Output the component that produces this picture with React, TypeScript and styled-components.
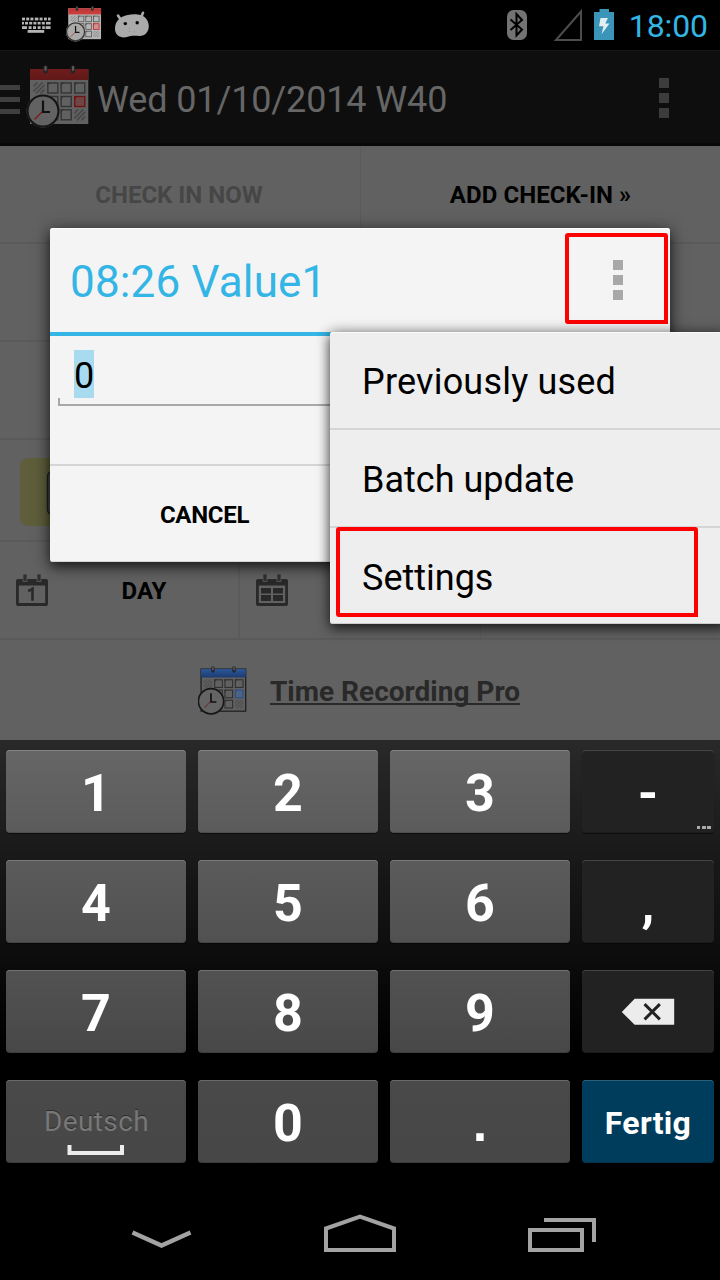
import React from 'react';
import styled, { createGlobalStyle } from 'styled-components';

const GlobalStyle = createGlobalStyle`
  * { box-sizing: border-box; }
  body { margin: 0; background: #000; font-family: Roboto, "Liberation Sans", sans-serif; }
  button { font-family: inherit; border: 0; padding: 0; background: none; }
`;

const Screen = styled.div`
  position: relative;
  width: 720px;
  height: 1280px;
  display: flex;
  flex-direction: column;
  overflow: hidden;
  background: #000;
`;

const StatusBar = styled.header`
  height: 50px;
  flex: none;
  display: flex;
  justify-content: space-between;
  padding: 0 12px 0 18px;
  background: #000;
`;

const StatusGroup = styled.div`
  display: flex;
  align-items: flex-start;
`;

const Clock = styled.span`
  margin-left: 13px;
  color: #33b5e5;
  font-size: 32px;
  line-height: 52px;
  letter-spacing: -0.1px;
`;

const ActionBar = styled.div`
  height: 96px;
  flex: none;
  display: flex;
  align-items: center;
  background: #0e0e0e;
  border-top: 1px solid #171717;
  border-bottom: 3px solid #080808;
`;

const DrawerMark = styled.div`
  width: 20px;
  display: flex;
  flex-direction: column;
  gap: 7px;
  margin: 4px 6px 0 0;
`;

const DrawerLine = styled.i`
  height: 5px;
  background: #3f3f3f;
`;

const ActionTitle = styled.h1`
  flex: 1;
  margin: 6px 0 0 7px;
  font-size: 36px;
  line-height: 44px;
  font-weight: 400;
  letter-spacing: -0.13px;
  color: #666;
`;

const Dots = styled.div<{ $color: string }>`
  display: flex;
  flex-direction: column;
  gap: 5px;
  & > i { width: 10px; height: 10px; background: ${(p) => p.$color}; }
`;

const OverflowSlot = styled.div`
  width: 61px;
  padding-top: 2px;
`;

const Content = styled.main`
  height: 594px;
  flex: none;
  display: flex;
  flex-direction: column;
  background: #616161;
`;

const Row = styled.div<{ $height: number }>`
  height: ${(p) => p.$height}px;
  flex: none;
  display: flex;
  border-bottom: 2px solid #5a5a5a;
`;

const HalfButton = styled.button<{ $color: string; $line?: boolean }>`
  width: 360px;
  padding: 1px ${(p) => (p.$line ? 0 : 2)}px 0 ${(p) => (p.$line ? 1 : 0)}px;
  font-size: 24px;
  font-weight: 700;
  letter-spacing: ${(p) => (p.$line ? 0.08 : 0)}px;
  color: ${(p) => p.$color};
  box-shadow: ${(p) => (p.$line ? 'inset 1px 0 #5b5b5b' : 'none')};
`;

const NoteTile = styled.div`
  width: 84px;
  height: 68px;
  margin: 18px 0 0 20px;
  padding: 12px 0 0 26px;
  border-radius: 8px;
  background: #5e5e3b;
`;

const PeriodTab = styled.button<{ $wide?: boolean }>`
  width: ${(p) => (p.$wide ? 241 : 240)}px;
  flex: none;
  display: flex;
  align-items: center;
  padding-left: 16px;
  border-right: ${(p) => (p.$wide ? 1 : 2)}px solid #5b5b5b;
`;

const PeriodLabel = styled.span`
  flex: 1;
  text-align: center;
  font-size: 24px;
  line-height: 30px;
  font-weight: 700;
  color: #000;
  padding: 2px 0 0 2px;
`;

const Promo = styled.footer`
  flex: 1;
  display: flex;
  align-items: center;
  padding-left: 198px;
`;

const PromoLink = styled.a`
  margin: 4px 0 0 23px;
  font-size: 28px;
  line-height: 34px;
  font-weight: 700;
  color: #292929;
  text-decoration: underline;
  text-decoration-thickness: 2px;
  text-underline-offset: 2px;
  text-decoration-skip-ink: none;
`;

const Dialog = styled.section`
  position: absolute;
  left: 50px;
  top: 228px;
  width: 620px;
  height: 334px;
  display: flex;
  flex-direction: column;
  background: #f4f4f4;
  border-radius: 3px;
  box-shadow: inset 0 1px #fff, inset 0 -1px #d5d5d5, 0 5px 12px rgba(0, 0, 0, 0.55), 0 2px 18px rgba(0, 0, 0, 0.4);
`;

const DialogHead = styled.div`
  height: 108px;
  display: flex;
  padding-left: 20px;
  border-bottom: 4px solid #33b5e5;
`;

const DialogTitle = styled.h2`
  flex: 1;
  margin: 0;
  font-size: 44px;
  line-height: 108px;
  font-weight: 400;
  letter-spacing: 0.17px;
  color: #33b5e5;
`;

const DialogMenuButton = styled.button`
  width: 103px;
  height: 91px;
  margin: 5px 2px 0 0;
  display: flex;
  align-items: center;
  justify-content: center;
  padding: 2px 0 0 2px;
  border: 4px solid #f00;
  border-radius: 3px 3px 0 3px;
`;

const DialogBody = styled.div`
  height: 128px;
  padding: 14px 8px 0;
`;

const Field = styled.div`
  height: 56px;
  padding-left: 16px;
  background:
    linear-gradient(#a8a8a8, #a8a8a8) left bottom / 2px 8px no-repeat,
    linear-gradient(#a8a8a8, #a8a8a8) left bottom / 100% 2px no-repeat;
`;

const Selection = styled.span`
  display: inline-block;
  width: 20px;
  height: 48px;
  font-size: 36px;
  line-height: 52px;
  background: #a8dbf0;
  color: #000;
`;

const DialogButton = styled.button`
  flex: 1;
  padding: 2px 311px 0 0;
  border-top: 2px solid #d5d5d5;
  font-size: 24px;
  font-weight: 700;
  letter-spacing: -0.3px;
  color: #000;
`;

const Menu = styled.ul`
  position: absolute;
  left: 330px;
  top: 332px;
  width: 396px;
  height: 292px;
  margin: 0;
  padding: 0;
  list-style: none;
  background: #eee;
  border-radius: 3px;
  box-shadow: inset 0 1px #fafafa, inset 0 -1px #ccc, 0 5px 12px rgba(0, 0, 0, 0.55), 0 0 14px rgba(0, 0, 0, 0.4);
`;

const MenuItem = styled.li<{ $spacing?: number }>`
  position: relative;
  height: 98px;
  padding-left: 32px;
  font-size: 36px;
  line-height: 101px;
  letter-spacing: ${(p) => p.$spacing ?? 0}px;
  color: #000;
  border-bottom: 2px solid #d5d5d5;
  &:last-child { height: 96px; border-bottom: 0; }
`;

const Highlight = styled.div`
  position: absolute;
  left: 6px;
  top: -1px;
  width: 362px;
  height: 90px;
  border: 4px solid #f00;
  border-radius: 3px 3px 0 3px;
`;

const Keyboard = styled.div`
  height: 444px;
  flex: none;
  display: grid;
  grid-template-columns: 180px 180px 180px 132px;
  grid-auto-rows: 83px;
  gap: 27px 12px;
  padding: 10px 6px 0;
  background: linear-gradient(#292929 0, #1a1a1a 110px, #0c0c0c 220px, #000 310px);
`;

const Key = styled.button<{ $from: string; $to: string; $edge: string; $small?: boolean }>`
  position: relative;
  display: flex;
  flex-direction: column;
  align-items: center;
  border-radius: 4px;
  font-size: ${(p) => (p.$small ? 32 : 52)}px;
  line-height: ${(p) => (p.$small ? 86 : 87)}px;
  letter-spacing: ${(p) => (p.$small ? 0.3 : 0)}px;
  font-weight: 700;
  color: #fff;
  background: linear-gradient(${(p) => p.$from}, ${(p) => p.$to});
  box-shadow: inset 0 1px ${(p) => p.$edge}, inset 0 -1px rgba(0, 0, 0, 0.15), 0 1px 1px rgba(0, 0, 0, 0.5);
`;

const PointMark = styled.span`
  font-family: "Liberation Sans", sans-serif;
  line-height: 86px;
`;

const SpaceLabel = styled.span`
  height: 65px;
  font-size: 28px;
  line-height: 84px;
  font-weight: 400;
  letter-spacing: 0.4px;
  padding-left: 1px;
  color: #777;
  text-shadow: 0 -1px #2c2c2c;
`;

const MoreHint = styled.span`
  position: absolute;
  right: 3px;
  bottom: 4px;
  display: flex;
  gap: 1px;
  & > i { width: 4px; height: 3px; background: #aaa; }
  & > i:first-child { width: 3px; margin-right: 1px; }
`;

const NavBar = styled.nav`
  height: 96px;
  flex: none;
  display: flex;
  gap: 131px;
  padding: 28px 0 0 131px;
`;

interface CalendarProps {
  size: number;
  head: string;
  headLow: string;
  paper: string;
  ink: string;
  accent: string;
  accentFill: string;
  hatch: string;
  face: string;
  rim: string;
  hand: string;
  outline?: string;
  clockRadius?: number;
}

function CalendarClock(p: CalendarProps) {
  const id = 'head' + p.size;
  const r = p.clockRadius ?? 15.5;
  const xs = [7.5, 21.3, 34.7, 48.3];
  const ys = [17.5, 31, 44.3];
  return (
    <svg width={p.size} height={p.size} viewBox="0 0 64 64">
      <defs>
        <linearGradient id={id} x1="0" y1="0" x2="0" y2="1">
          <stop offset="0" stopColor={p.head} />
          <stop offset="1" stopColor={p.headLow} />
        </linearGradient>
      </defs>
      <rect x="4" y="4" width="58.3" height="55" fill={p.paper} stroke={p.outline ?? 'none'} strokeWidth="1.6" />
      <rect x="4" y="4" width="58.3" height="11" fill={`url(#${id})`} />
      {ys.map((y, j) =>
        xs.map((x, i) => {
          if (i === 0 && j > 0) return null;
          if ((i === 0 && j === 0) || (i === 3 && j === 2)) {
            return (
              <path
                key={`${i}${j}`}
                d={`M${x} ${y + 4}l4-4M${x} ${y + 9}l9-9M${x + 2.5} ${y + 11}l8.5-8.5M${x + 7} ${y + 11}l4-4`}
                stroke={p.hatch}
                strokeWidth="1.7"
              />
            );
          }
          const hot = i === 3 && j === 1;
          return (
            <g key={`${i}${j}`}>
              <rect x={x + 0.5} y={y + 0.5} width="10" height="10" fill={hot ? p.accentFill : 'none'} stroke={hot ? p.accent : p.ink} strokeWidth="1.4" />
              <path d={`M${x} ${y}h3.500l-3.500 3.500z`} fill={hot ? p.accent : p.ink} />
            </g>
          );
        }),
      )}
      {[19.5, 47].map((x) => (
        <g key={x}>
          <rect x={x - 2.2} y="0.2" width="4.4" height="8.2" rx="2" fill="#242424" />
          <rect x={x - 1} y="1" width="2" height="5" rx="1" fill="#5c5c5c" />
        </g>
      ))}
      <circle cx="17" cy="46" r={r + 1} fill={p.paper} />
      <circle cx="17" cy="46" r={r} fill={p.face} stroke={p.rim} strokeWidth="2.2" />
      <path d="M17 46l-8.500 8.500" stroke={p.hand} strokeWidth="1.4" />
      <path d="M17 35.500v11.500h7" fill="none" stroke="#111" strokeWidth="2.200" />
    </svg>
  );
}

const keyboardRows = [
  { y: 0, h: 2.8, keys: [[0, 3], [4.2, 3], [8.4, 3], [12.8, 3.6], [17.6, 3], [22, 2.8], [26, 2.6]] },
  { y: 4.3, h: 2.6, keys: [[0, 2], [3, 3], [7.2, 3], [11.4, 3], [15.6, 3], [19.8, 3], [24, 4.6]] },
  { y: 8.6, h: 2.8, keys: [[0, 5], [6.6, 3], [11, 3], [15.6, 3], [20.2, 2.6], [23.6, 5]] },
  { y: 12.4, h: 2.8, keys: [[5.6, 16.6]] },
];

const KeyboardIcon = () => (
  <svg width="30" height="50" viewBox="22 0 30 50">
    <g transform="translate(22 17.6)" fill="#b4b4b4">
      {keyboardRows.map((row) =>
        row.keys.map(([x, w]) => <rect key={`${row.y}-${x}`} x={x} y={row.y} width={w} height={row.h} />),
      )}
    </g>
  </svg>
);

const DroidIcon = () => (
  <svg width="36" height="50" viewBox="114 0 36 50">
    <path d="M118 15.500l3.400 5M143 12.800l-2.500 6" stroke="#aaa" strokeWidth="2.600" strokeLinecap="round" />
    <path
      d="M115 29c0-5.500 2.600-9.600 7.300-12.200 4.500-2.800 14-3.200 18.300-1.800 5.400 1.800 8.200 6.300 8.200 11.300 0 6-4.200 10-9.600 9.700-5-.6-8.400-.4-12.300 1-6 1.800-11.900-1.800-11.900-8z"
      fill="#aaa"
    />
    <circle cx="125.300" cy="23.600" r="1.700" fill="#000" />
    <circle cx="137.200" cy="22.700" r="1.700" fill="#000" />
    <g fill="#888">
      <circle cx="129.500" cy="28.500" r=".5" />
      <circle cx="129.500" cy="31.500" r=".5" />
      <circle cx="134.500" cy="31.800" r=".5" />
    </g>
  </svg>
);

const SystemIcons = () => (
  <svg width="111" height="50" viewBox="505 0 111 50">
    <rect x="507" y="10" width="20" height="30" rx="6.500" fill="#737373" />
    <path d="M510.500 19.500l11.500 10-5.500 6v-21.500l5.500 6-11.500 10" fill="none" stroke="#000" strokeWidth="2" />
    <path d="M556 40l25-28.500v28.500z" fill="none" stroke="#4c4c4c" strokeWidth="2" />
    <path d="M594 40v-28h5.500v-3h9.500v3h5v28z" fill="#3a95b9" />
    <path d="M600.500 18h7.500l-2.800 5.500h4.300l-8 10.800 2-8h-4.500z" fill="#e3eef3" />
  </svg>
);

const PeriodIcon = ({ week }: { week?: boolean }) => (
  <svg width="32" height="32" viewBox="0 0 32 32">
    <path d="M2 5h28a2 2 0 0 1 2 2v23a2 2 0 0 1-2 2H2a2 2 0 0 1-2-2V7a2 2 0 0 1 2-2z" fill="#292929" />
    <rect x="2.800" y="11.500" width="26.400" height="17.500" fill="#616161" />
    <rect x="7" y="0" width="4" height="7.500" fill="#303030" stroke="#616161" strokeWidth=".7" />
    <rect x="21" y="0" width="4" height="7.500" fill="#303030" stroke="#616161" strokeWidth=".7" />
    {week ? (
      <path d="M5 14h10v5.500H5zM17 14h10v5.500H17zM5 21h10v6H5zM17 21h10v6H17z" fill="#292929" />
    ) : (
      <path d="M12 16.500h1.500l3-1.800v12.100" fill="none" stroke="#292929" strokeWidth="2.600" />
    )}
  </svg>
);

const digitTones = [
  { from: '#666', to: '#5b5b5b', edge: '#838383' },
  { from: '#5b5b5b', to: '#515151', edge: '#7a7a7a' },
  { from: '#525252', to: '#484848', edge: '#727272' },
  { from: '#494949', to: '#474747', edge: '#6a6a6a' },
];
const darkTone = { from: '#222', to: '#222', edge: '#454545' };
const blueTone = { from: '#003d5c', to: '#003d5c', edge: '#2b5f7a' };

const keyRows = [
  ['1', '2', '3', '-'],
  ['4', '5', '6', ','],
  ['7', '8', '9', 'delete'],
  ['space', '0', '.', 'Fertig'],
];

function KeyFace({ name }: { name: string }) {
  if (name === 'delete') {
    return (
      <svg width="54" height="84" viewBox="0 0 54 84">
        <path d="M.5 42.500l13-13.500h40v26.500H13.500z" fill="#ececec" />
        <path d="M23.500 34.500l15.500 15.500M39 34.500L23.500 50" stroke="#222" strokeWidth="3" />
      </svg>
    );
  }
  if (name === 'space') {
    return (
      <>
        <SpaceLabel>Deutsch</SpaceLabel>
        <svg width="58" height="11" viewBox="0 0 58 11">
          <path d="M2.500 0v8h52.500v-8" fill="none" stroke="#ececec" strokeWidth="4" />
        </svg>
      </>
    );
  }
  if (name === '.') {
    return <PointMark>.</PointMark>;
  }
  return (
    <>
      {name}
      {name === '-' && (
        <MoreHint>
          <i />
          <i />
          <i />
        </MoreHint>
      )}
    </>
  );
}

const SquareDots = ({ color }: { color: string }) => (
  <Dots $color={color}>
    <i />
    <i />
    <i />
  </Dots>
);

const StatusCalendar = styled.div`
  margin: 6px 12px 0 14px;
`;

const StatusKeyboard = styled.div`
  margin-left: 4px;
`;

export default function App() {
  return (
    <Screen>
      <GlobalStyle />
      <StatusBar>
        <StatusGroup>
          <StatusKeyboard><KeyboardIcon /></StatusKeyboard>
          <StatusCalendar>
            <CalendarClock size={36} head="#b93535" headLow="#cf4040" paper="#b5b5b5" ink="#555" accent="#c22626" accentFill="#cf9090" hatch="#888" face="#aaa" rim="#34342c" hand="#c22626" clockRadius={16} />
          </StatusCalendar>
          <DroidIcon />
        </StatusGroup>
        <StatusGroup>
          <SystemIcons />
          <Clock>18:00</Clock>
        </StatusGroup>
      </StatusBar>
      <ActionBar>
        <DrawerMark>
          <DrawerLine />
          <DrawerLine />
          <DrawerLine />
        </DrawerMark>
        <CalendarClock size={64} head="#701c1c" headLow="#601818" paper="#616161" ink="#343434" accent="#6e1414" accentFill="#704545" hatch="#484848" face="#626262" rim="#161616" hand="#7a1c1c" />
        <ActionTitle>Wed 01/10/2014 W40</ActionTitle>
        <OverflowSlot><SquareDots color="#3c3c3c" /></OverflowSlot>
      </ActionBar>
      <Content>
        <Row $height={98}>
          <HalfButton $color="#464646">CHECK IN NOW</HalfButton>
          <HalfButton $color="#000" $line>ADD CHECK-IN »</HalfButton>
        </Row>
        <Row $height={98} />
        <Row $height={98} />
        <Row $height={102}>
          <NoteTile>
            <svg width="36" height="46" viewBox="0 0 36 46">
              <rect x="1.500" y="1.500" width="33" height="43" rx="5" fill="#4a4a4a" stroke="#202020" strokeWidth="1.500" />
            </svg>
          </NoteTile>
        </Row>
        <Row $height={98}>
          <PeriodTab><PeriodIcon /><PeriodLabel>DAY</PeriodLabel></PeriodTab>
          <PeriodTab $wide><PeriodIcon week /></PeriodTab>
        </Row>
        <Promo>
          <CalendarClock size={49} head="#2c579c" headLow="#1c3c70" paper="#606060" ink="#303030" accent="#28508c" accentFill="#4d6285" hatch="#505050" face="#646464" rim="#161616" hand="#6e3434" outline="#1c1c1c" clockRadius={16.5} />
          <PromoLink>Time Recording Pro</PromoLink>
        </Promo>
      </Content>
      <Keyboard>
        {keyRows.map((row, r) =>
          row.map((name, c) => {
            const tone = name === 'Fertig' ? blueTone : c === 3 ? darkTone : digitTones[r];
            return (
              <Key key={name} $from={tone.from} $to={tone.to} $edge={tone.edge} $small={name === 'Fertig'}>
                <KeyFace name={name} />
              </Key>
            );
          }),
        )}
      </Keyboard>
      <NavBar>
        <svg width="61" height="44" viewBox="131 1212 61 44">
          <path d="M132.500 1232.500l29 13 29-13" fill="none" stroke="#a3a3a3" strokeWidth="4.500" />
        </svg>
        <svg width="74" height="44" viewBox="323 1212 74 44">
          <path d="M326 1250v-21.500l34-12 34 12v21.500z" fill="none" stroke="#a3a3a3" strokeWidth="4" />
        </svg>
        <svg width="72" height="44" viewBox="528 1212 72 44">
          <path d="M530 1230h52v20h-52zM544 1220h50v22" fill="none" stroke="#a3a3a3" strokeWidth="4" />
        </svg>
      </NavBar>
      <Dialog>
        <DialogHead>
          <DialogTitle>08:26 Value1</DialogTitle>
          <DialogMenuButton><SquareDots color="#a8a8a8" /></DialogMenuButton>
        </DialogHead>
        <DialogBody>
          <Field><Selection>0</Selection></Field>
        </DialogBody>
        <DialogButton>CANCEL</DialogButton>
      </Dialog>
      <Menu>
        <MenuItem $spacing={0.2}>Previously used</MenuItem>
        <MenuItem>Batch update</MenuItem>
        <MenuItem>Settings<Highlight /></MenuItem>
      </Menu>
    </Screen>
  );
}
